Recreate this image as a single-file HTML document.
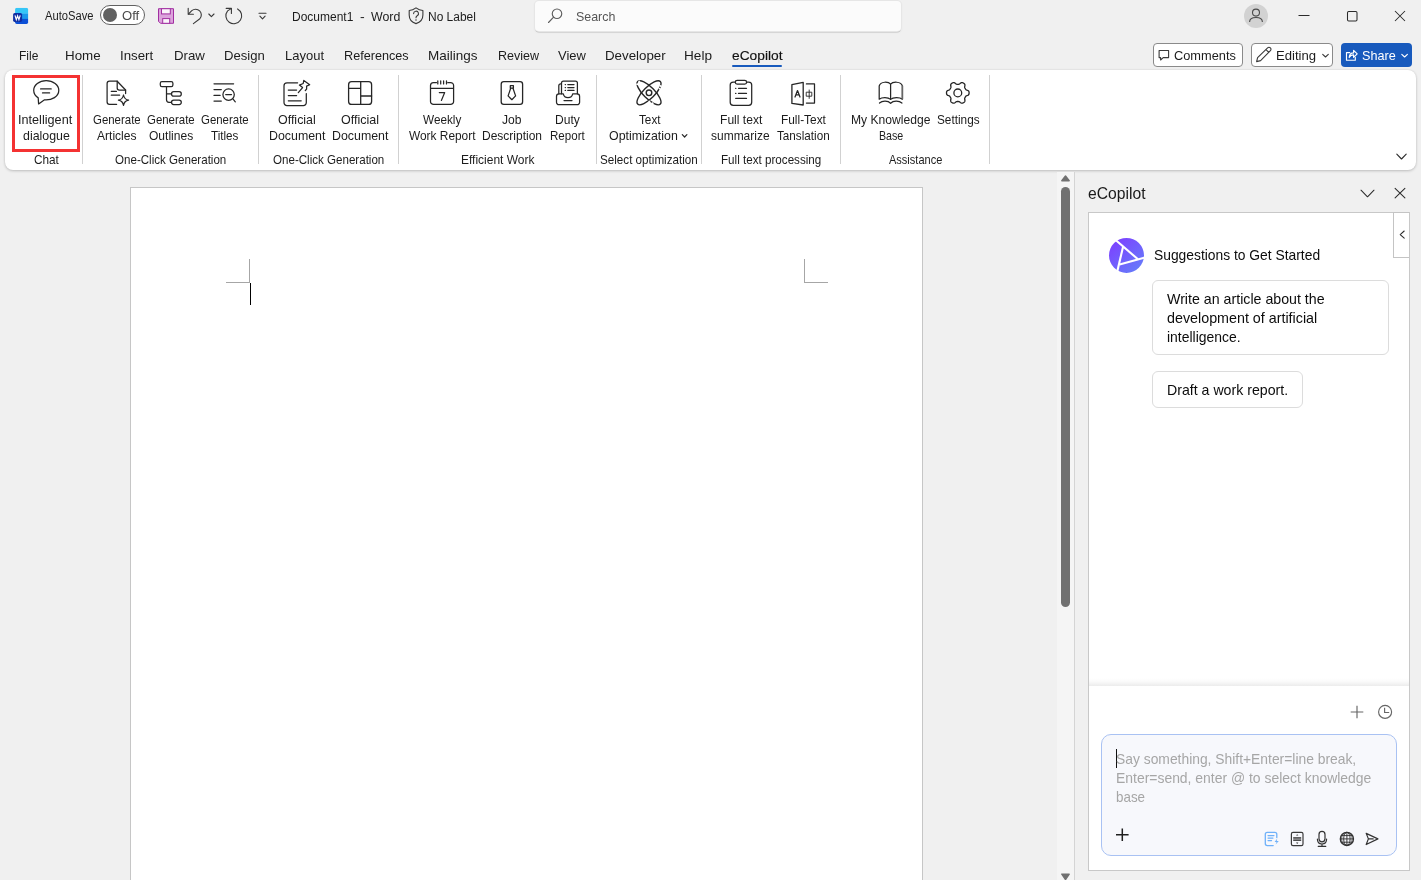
<!DOCTYPE html>
<html><head><meta charset="utf-8"><title>Word</title>
<style>
html,body{margin:0;padding:0;}
body{width:1421px;height:880px;overflow:hidden;background:#f0f0f0;position:relative;font-family:"Liberation Sans",sans-serif;}
.a{position:absolute;}
.t{position:absolute;white-space:nowrap;transform-origin:0 0;line-height:normal;}
svg{position:absolute;overflow:visible;}
.sep{position:absolute;width:1px;top:75px;height:89px;background:#d1d1d1;}
.ic{fill:none;stroke:#333;stroke-width:1;stroke-linecap:round;stroke-linejoin:round;}
</style></head><body>

<!-- ===== search box ===== -->
<div class="a" style="left:535px;top:1px;width:366px;height:30px;background:#fbfbfb;border-radius:4px;box-shadow:0 0 0 1px #e6e6e6,0 1.5px 0.5px rgba(0,0,0,.17),0 1px 3px rgba(0,0,0,.08);"></div>

<!-- ===== toggle ===== -->
<div class="a" style="left:100px;top:5px;width:43px;height:18px;border:1px solid #616161;border-radius:10px;background:#fff;"></div>
<div class="a" style="left:103.1px;top:8px;width:13.8px;height:13.8px;border-radius:7px;background:#616161;"></div>

<!-- avatar -->
<div class="a" style="left:1244px;top:4px;width:24px;height:24px;border-radius:12px;background:#d2d2d2;"></div>

<!-- ===== tab underline ===== -->
<div class="a" style="left:732px;top:64.5px;width:50px;height:2.5px;background:#185abd;border-radius:1px;"></div>

<!-- ===== right buttons ===== -->
<div class="a" style="left:1153px;top:43px;width:88px;height:22px;border:1px solid #8a8a8a;border-radius:4px;background:#fff;"></div>
<div class="a" style="left:1251px;top:43px;width:80px;height:22px;border:1px solid #8a8a8a;border-radius:4px;background:#fff;"></div>
<div class="a" style="left:1341px;top:43px;width:71px;height:24px;border-radius:4px;background:#185abd;"></div>

<!-- ===== ribbon panel ===== -->
<div class="a" style="left:5px;top:70px;width:1411px;height:100px;background:#fff;border-radius:8px;box-shadow:0 1px 3px rgba(0,0,0,.2),0 0 2px rgba(0,0,0,.08);"></div>
<div class="a" style="left:12px;top:75px;width:62px;height:71px;border:3px solid #f43232;"></div>
<div class="sep" style="left:82px;"></div>
<div class="sep" style="left:258px;"></div>
<div class="sep" style="left:398px;"></div>
<div class="sep" style="left:596px;"></div>
<div class="sep" style="left:701px;"></div>
<div class="sep" style="left:840px;"></div>
<div class="sep" style="left:989px;"></div>

<!-- ===== document page ===== -->
<div class="a" style="left:130px;top:187px;width:791px;height:700px;background:#fff;border:1px solid #c6c6c6;"></div>
<div class="a" style="left:249px;top:259px;width:1px;height:24px;background:#a6a6a6;"></div>
<div class="a" style="left:226px;top:282px;width:24px;height:1px;background:#a6a6a6;"></div>
<div class="a" style="left:804px;top:259px;width:1px;height:24px;background:#a6a6a6;"></div>
<div class="a" style="left:804px;top:282px;width:24px;height:1px;background:#a6a6a6;"></div>
<div class="a" style="left:250px;top:283px;width:1px;height:22px;background:#000;"></div>

<!-- ===== scrollbar ===== -->
<div class="a" style="left:1057px;top:172px;width:17px;height:708px;background:#f5f5f5;"></div>
<div class="a" style="left:1061px;top:187px;width:9px;height:420px;background:#717171;border-radius:4.5px;"></div>
<svg style="left:1061px;top:175px" width="9" height="7"><path d="M4.5 1 L8.2 5.8 H0.8 Z" fill="#717171" stroke="#717171" stroke-width="1.4" stroke-linejoin="round"/></svg>
<svg style="left:1061px;top:873px" width="9" height="8"><path d="M0.8 1.2 H8.2 L4.5 6.6 Z" fill="#717171" stroke="#717171" stroke-width="1.4" stroke-linejoin="round"/></svg>
<div class="a" style="left:1074px;top:172px;width:1px;height:708px;background:#d4d4d4;"></div>

<!-- ===== pane ===== -->
<div class="a" style="left:1088px;top:212px;width:320px;height:657px;background:#fff;border:1px solid #c8c8c8;"></div>
<div class="a" style="left:1393px;top:212px;width:15px;height:44px;background:#fff;border:1px solid #c4c4c4;border-right:none;"></div>
<!-- shadow above input -->
<div class="a" style="left:1089px;top:678px;width:320px;height:8px;background:linear-gradient(#fff,#fbfbfb 40%,#ececec);"></div>
<!-- cards -->
<div class="a" style="left:1152px;top:280px;width:235px;height:73px;border:1px solid #dcdcdc;border-radius:6px;background:#fff;"></div>
<div class="a" style="left:1152px;top:371px;width:149px;height:35px;border:1px solid #dcdcdc;border-radius:6px;background:#fff;"></div>
<!-- input -->
<div class="a" style="left:1101px;top:734px;width:294px;height:120px;border:1px solid #a9c2f3;border-radius:10px;background:#f7f8fc;"></div>
<div class="a" style="left:1116px;top:749px;width:1px;height:19px;background:#111;"></div>

<svg style="left:0;top:0" width="1421" height="880" viewBox="0 0 1421 880">
<g>
<clipPath id="wc"><rect x="15.1" y="7.8" width="13" height="16.1" rx="1.6"/></clipPath>
<g clip-path="url(#wc)"><rect x="15" y="7.8" width="14" height="6" fill="#35c6f7"/><rect x="15" y="13.6" width="14" height="5.4" fill="#1b97ea"/><rect x="15" y="18.9" width="14" height="5.2" fill="#0b4fd6"/></g>
<rect x="13.1" y="12.9" width="9" height="9" rx="1.6" fill="#0f2fa3"/>
<path d="M15 15.3 L16.3 19.7 L17.6 15.9 L18.9 19.7 L20.2 15.3" fill="none" stroke="#fff" stroke-width="1.15" stroke-linejoin="miter"/>
</g>
<path d="M158.5 8.7 H173.5 V23.3 H160.5 L158.5 21.3 Z" fill="#dca3dc" stroke="#a12ea1" stroke-width="1"/>
<rect x="161.5" y="8.7" width="8.8" height="5.2" fill="#fbf4fb" stroke="#a12ea1" stroke-width="1"/>
<rect x="162.7" y="18.6" width="7" height="4.7" fill="#fbf4fb" stroke="#a12ea1" stroke-width="1"/>
<g fill="none" stroke="#3a3a3a" stroke-width="1.1" stroke-linecap="round" stroke-linejoin="round">
<path d="M188.2 8.3 V14.3 H193.4"/>
<path d="M188.5 14 L191.8 10.7 a5.7 5.7 0 0 1 8.05 8.05 L193.4 23.6"/>
<path d="M208.8 14 L211.4 16.7 L214 14"/>
<path d="M226.2 8.4 H231.4 V13.5"/>
<path d="M237.6 8.9 A7.9 7.9 0 1 1 227.6 10.9 L231.2 8.6"/>
<path d="M259 13.2 H266"/><path d="M259.9 16.2 L262.5 18.9 L265.1 16.2"/>
<path d="M416 7.9 C413.8 9.6 411.5 10.4 409.2 10.5 V15 C409.2 19.5 412 22.4 416 23.6 C420 22.4 422.9 19.5 422.9 15 V10.5 C420.5 10.4 418.2 9.6 416 7.9 Z"/>
<path d="M413.6 13.6 a2.45 2.45 0 1 1 3.6 2.2 c-0.8 0.5 -1.2 1 -1.2 2"/>
</g>
<circle cx="416" cy="20" r="0.75" fill="#3a3a3a"/>
<g fill="none" stroke="#5e5e5e" stroke-width="1.15" stroke-linecap="round"><circle cx="557" cy="13.7" r="4.75"/><path d="M553.6 17.2 L548.5 22.5"/></g>
<g fill="none" stroke="#4a4a4a" stroke-width="1.1"><circle cx="1256" cy="12.6" r="3.5"/><path d="M1249.6 22 C1249.6 18.6 1252 17.5 1256 17.5 C1260 17.5 1262.4 18.6 1262.4 22"/></g>
<g fill="none" stroke="#2b2b2b" stroke-width="1.05"><path d="M1298.5 15.5 H1309.5"/><rect x="1347.5" y="11.5" width="9.5" height="9.5" rx="1.2"/><path d="M1395 11 L1405 21 M1405 11 L1395 21"/></g>
<g fill="none" stroke="#3a3a3a" stroke-width="1.1" stroke-linejoin="round" stroke-linecap="round">
<path d="M1159.1 50.5 H1168.6 V57.6 H1163.2 L1160.6 60 V57.6 H1159.1 Z"/>
<path d="M1256.6 61.6 L1257.6 57.6 L1267.6 47.9 a1.9 1.9 0 0 1 2.8 2.8 L1260.6 60.6 Z M1266 49.6 L1268.8 52.4"/>
<path d="M1322.7 54.3 L1325.5 57 L1328.3 54.3"/>
</g>
<g fill="none" stroke="#fff" stroke-width="1.15" stroke-linejoin="round" stroke-linecap="round">
<path d="M1349.8 52.6 H1346.5 V60.2 H1355.3 V57.4"/>
<path d="M1349.2 57.6 C1349.4 54.4 1351.3 52.9 1353.6 52.9 V50.4 L1357.2 53.9 L1353.6 57.3 V54.9 C1351.6 54.9 1350.2 55.6 1349.2 57.6 Z"/>
<path d="M1401.8 54.3 L1404.6 57 L1407.4 54.3"/>
</g>
<path d="M1396.8 154.2 L1401.5 159 L1406.2 154.2" fill="none" stroke="#2b2b2b" stroke-width="1.1" stroke-linecap="round" stroke-linejoin="round"/>
<g fill="none" stroke="#262626" stroke-width="1.25" stroke-linecap="round" stroke-linejoin="round">
<path d="M44.2 99.9 C52 100.6 58.8 96.4 58.8 90.3 C58.8 84.9 53.2 80.6 46.2 80.6 C39.2 80.6 33.7 84.9 33.7 90.3 C33.7 93.4 35.4 96.1 38.2 97.9 L38.6 103.9 Z"/>
<path d="M40.6 88.9 H51.2 M42.5 92.9 H49.6"/>
<path d="M116.6 104.4 H109.5 a2.4 2.4 0 0 1 -2.4 -2.4 V83.6 a2.4 2.4 0 0 1 2.4 -2.4 H117.2 L125.6 90 V93.6"/>
<path d="M117.2 81.2 V88 a2 2 0 0 0 2 2 H125.6"/>
<path d="M111.3 91.4 H116.4 M111.3 95.2 H119.6"/>
<path d="M123.5 95 Q124.3 99.4 128.6 100.2 Q124.3 101 123.5 105.4 Q122.7 101 118.4 100.2 Q122.7 99.4 123.5 95 Z"/>
<rect x="160.3" y="81.7" width="12.6" height="5" rx="1.6"/>
<path d="M166.5 86.7 V99.8 a2.5 2.5 0 0 0 2.5 2.5 H171.5 M166.5 93.9 H171.5"/>
<rect x="171.5" y="91.7" width="9.8" height="4.4" rx="2.2"/><rect x="171.5" y="100.1" width="9.8" height="4.4" rx="2.2"/>
<path d="M214 83.8 H233.6 M214 89.5 H221.3 M214 95.4 H220.1 M214 101.1 H221.3"/>
<circle cx="228.6" cy="94.6" r="5.7"/><path d="M225.7 94.6 H231.5 M232.7 98.7 L235.3 101.8"/>
<path d="M297.6 82.8 H287 a3 3 0 0 0 -3 3 V102.6 a3 3 0 0 0 3 3 H303.3 a3 3 0 0 0 3 -3 V93.6"/>
<path d="M288.3 90 H296.6 M288.3 95.5 H296.6 M288.3 100.8 H301.2"/>
<path d="M298.3 92.6 L302.6 87.6 L299.4 85.1 L303.2 83.5 L303.8 80.4 L309.7 84.7 L306.6 86.1 L306.6 89.1 L305.3 90.5"/>
<g stroke-width="1.3"><rect x="348.6" y="81.7" width="23" height="22.7" rx="3"/><path d="M360.7 81.7 V104.4 M348.6 88.4 H360.7 M360.7 96 H371.6"/></g>
<path d="M436.5 82.5 H433.5 a3 3 0 0 0 -3 3 V101.4 a3 3 0 0 0 3 3 H450.6 a3 3 0 0 0 3 -3 V85.5 a3 3 0 0 0 -3 -3 H447.7 M430.5 88.4 H453.6"/>
<path d="M437.8 80.9 V83.9 M440.7 80.9 V83.9 M443.6 80.9 V83.9 M446.5 80.9 V83.9"/>
<path d="M439.3 92.6 H444.7 L441.4 100.4" stroke-width="1.2"/>
<rect x="501.2" y="81.7" width="21.4" height="22.7" rx="2.6" stroke-width="1.3"/>
<rect x="510.3" y="85.7" width="3.1" height="2.5"/><path d="M510.7 88.3 L508.1 95.9 L511.85 99.7 L515.6 95.9 L513 88.3"/>
<path d="M556.5 96.4 a2.5 2.5 0 0 1 2.5 -2.5 H563.3 C563.8 96.4 565.6 97.6 568 97.6 C570.4 97.6 572.2 96.4 572.7 93.9 H577.1 a2.5 2.5 0 0 1 2.5 2.5 V102.2 a2.5 2.5 0 0 1 -2.5 2.5 H559 a2.5 2.5 0 0 1 -2.5 -2.5 Z"/>
<path d="M561.5 93.8 V83.1 a2 2 0 0 1 2 -2 H575.4 a2 2 0 0 1 2 2 V93.8 M558.8 93.8 V85.8 a2 2 0 0 1 2 -2 H561.4"/>
<path d="M567.8 84.5 H574 M567.8 87.5 H574 M567.8 90.4 H574 M564 100.5 H572"/>
<path d="M565.2 84.5 h0.3 M565.2 87.5 h0.3 M565.2 90.4 h0.3"/>
<g stroke-width="1.4"><ellipse cx="649" cy="92.8" rx="16" ry="5.7" transform="rotate(45 649 92.8)"/><ellipse cx="649" cy="92.8" rx="16" ry="5.7" transform="rotate(-45 649 92.8)"/><circle cx="649" cy="92.8" r="2.8"/></g>
<g fill="#fff" stroke="none"><circle cx="639.2" cy="81.6" r="1"/><circle cx="637.2" cy="84.3" r="1"/><circle cx="660.6" cy="86" r="1"/><circle cx="659.4" cy="88.6" r="0.9"/><circle cx="649.4" cy="101.6" r="1"/><circle cx="652.6" cy="103.2" r="1"/></g>
<rect x="730.2" y="82.1" width="21.5" height="23.2" rx="3"/>
<rect x="735.3" y="80.3" width="11.3" height="3.7" rx="1.85" fill="#fff"/>
<path d="M738.5 88.3 H746.5 M738.5 93.4 H746.5 M735.7 98.4 H746.5 M735.6 88.3 h0.3 M735.6 93.4 h0.3"/>
<path d="M803.2 82.3 L791.9 84.6 V103.4 L803.2 105 Z" stroke-width="1.3"/><path d="M806.4 83.9 H814.5 V103.1 H806.4"/>
<path d="M795 97 L797.5 90.6 L800 97 M795.9 94.9 H799.1"/>
<path d="M806.6 92.2 H811.8 V96.2 H806.6 Z M809.2 90 V98.4" stroke-width="0.9"/>
<path d="M890.6 84.2 C888.6 81.6 880.6 81 879.2 86 V99.2 C882 97 888 97 890.6 99.4 C893.2 97 899.6 97 902.4 99.2 V86 C901 81 892.6 81.6 890.6 84.2 Z M890.6 84.2 V99.4"/>
<path d="M879.5 103 C882.4 100.6 888 100.6 890.6 103.3 C893.2 100.6 899 100.6 901.9 103" />
<path d="M902.4 86 V99" stroke-width="1.6" stroke="#666"/>
<path d="M969.10 92.90 L969.09 93.20 L969.07 93.49 L969.03 93.78 L968.96 94.07 L968.86 94.36 L968.71 94.63 L968.50 94.88 L968.21 95.11 L967.84 95.31 L967.41 95.48 L966.98 95.62 L966.60 95.76 L966.30 95.91 L966.06 96.07 L965.88 96.25 L965.73 96.43 L965.60 96.62 L965.48 96.81 L965.36 97.01 L965.25 97.20 L965.14 97.40 L965.03 97.59 L964.92 97.79 L964.82 98.00 L964.74 98.22 L964.68 98.47 L964.65 98.75 L964.68 99.09 L964.75 99.49 L964.84 99.94 L964.91 100.39 L964.92 100.81 L964.87 101.18 L964.75 101.49 L964.59 101.75 L964.39 101.98 L964.18 102.18 L963.95 102.36 L963.70 102.53 L963.45 102.69 L963.19 102.83 L962.92 102.95 L962.65 103.06 L962.36 103.15 L962.07 103.21 L961.76 103.21 L961.43 103.16 L961.09 103.02 L960.73 102.80 L960.38 102.51 L960.04 102.21 L959.72 101.95 L959.44 101.76 L959.18 101.64 L958.94 101.57 L958.71 101.53 L958.48 101.51 L958.25 101.50 L958.03 101.50 L957.80 101.50 L957.57 101.50 L957.35 101.50 L957.12 101.51 L956.89 101.53 L956.66 101.57 L956.42 101.64 L956.16 101.76 L955.88 101.95 L955.56 102.21 L955.22 102.51 L954.87 102.80 L954.51 103.02 L954.17 103.16 L953.84 103.21 L953.53 103.21 L953.24 103.15 L952.95 103.06 L952.68 102.95 L952.41 102.83 L952.15 102.69 L951.90 102.53 L951.65 102.36 L951.42 102.18 L951.21 101.98 L951.01 101.75 L950.85 101.49 L950.73 101.18 L950.68 100.81 L950.69 100.39 L950.76 99.94 L950.85 99.49 L950.92 99.09 L950.95 98.75 L950.92 98.47 L950.86 98.22 L950.78 98.00 L950.68 97.79 L950.57 97.59 L950.46 97.40 L950.35 97.20 L950.24 97.01 L950.12 96.81 L950.00 96.62 L949.87 96.43 L949.72 96.25 L949.54 96.07 L949.30 95.91 L949.00 95.76 L948.62 95.62 L948.19 95.48 L947.76 95.31 L947.39 95.11 L947.10 94.88 L946.89 94.63 L946.74 94.36 L946.64 94.07 L946.57 93.78 L946.53 93.49 L946.51 93.20 L946.50 92.90 L946.51 92.60 L946.53 92.31 L946.57 92.02 L946.64 91.73 L946.74 91.44 L946.89 91.17 L947.10 90.92 L947.39 90.69 L947.76 90.49 L948.19 90.32 L948.62 90.18 L949.00 90.04 L949.30 89.89 L949.54 89.73 L949.72 89.55 L949.87 89.37 L950.00 89.18 L950.12 88.99 L950.24 88.79 L950.35 88.60 L950.46 88.40 L950.57 88.21 L950.68 88.01 L950.78 87.80 L950.86 87.58 L950.92 87.33 L950.95 87.05 L950.92 86.71 L950.85 86.31 L950.76 85.86 L950.69 85.41 L950.68 84.99 L950.73 84.62 L950.85 84.31 L951.01 84.05 L951.21 83.82 L951.42 83.62 L951.65 83.44 L951.90 83.27 L952.15 83.11 L952.41 82.97 L952.68 82.85 L952.95 82.74 L953.24 82.65 L953.53 82.59 L953.84 82.59 L954.17 82.64 L954.51 82.78 L954.87 83.00 L955.22 83.29 L955.56 83.59 L955.88 83.85 L956.16 84.04 L956.42 84.16 L956.66 84.23 L956.89 84.27 L957.12 84.29 L957.35 84.30 L957.57 84.30 L957.80 84.30 L958.03 84.30 L958.25 84.30 L958.48 84.29 L958.71 84.27 L958.94 84.23 L959.18 84.16 L959.44 84.04 L959.72 83.85 L960.04 83.59 L960.38 83.29 L960.73 83.00 L961.09 82.78 L961.43 82.64 L961.76 82.59 L962.07 82.59 L962.36 82.65 L962.65 82.74 L962.92 82.85 L963.19 82.97 L963.45 83.11 L963.70 83.27 L963.95 83.44 L964.18 83.62 L964.39 83.82 L964.59 84.05 L964.75 84.31 L964.87 84.62 L964.92 84.99 L964.91 85.41 L964.84 85.86 L964.75 86.31 L964.68 86.71 L964.65 87.05 L964.68 87.33 L964.74 87.58 L964.82 87.80 L964.92 88.01 L965.03 88.21 L965.14 88.40 L965.25 88.60 L965.36 88.79 L965.48 88.99 L965.60 89.18 L965.73 89.37 L965.88 89.55 L966.06 89.73 L966.30 89.89 L966.60 90.04 L966.98 90.18 L967.41 90.32 L967.84 90.49 L968.21 90.69 L968.50 90.92 L968.71 91.17 L968.86 91.44 L968.96 91.73 L969.03 92.02 L969.07 92.31 L969.09 92.60 Z" stroke-width="1.3"/><circle cx="957.8" cy="92.9" r="3.9" stroke-width="1.3"/>
<path d="M682.3 134.7 L684.6 137 L686.9 134.7" stroke-width="1.2"/>
</g>
<g fill="none" stroke="#2b2b2b" stroke-width="1.05" stroke-linecap="round" stroke-linejoin="round">
<path d="M1361 190.2 L1367.5 196.8 L1374 190.2"/><path d="M1395.1 188.3 L1404.9 197.9 M1404.9 188.3 L1395.1 197.9"/>
<path d="M1404.2 231 L1400.2 234.6 L1404.2 238.2"/>
</g>
<defs><linearGradient id="lg" x1="0.15" y1="0.1" x2="0.85" y2="0.95"><stop offset="0" stop-color="#7c42ff"/><stop offset="1" stop-color="#667cfa"/></linearGradient></defs>
<circle cx="1126.5" cy="255.4" r="17.5" fill="url(#lg)"/>
<g stroke="#fff" stroke-width="2.1" stroke-linecap="butt" fill="none"><path d="M1115.9 240.3 L1138 259.3"/><path d="M1145 257.6 L1119.6 264.4"/><path d="M1117.2 271.8 L1123 247"/></g>
<g fill="none" stroke="#666" stroke-width="1.15" stroke-linecap="butt"><path d="M1350.7 712 H1363.3 M1357 705.7 V718.3"/><circle cx="1385.1" cy="711.9" r="6.5"/><path d="M1384.6 707.8 V712.5 H1389.2"/></g>
<path d="M1116 834.7 H1128.6 M1122.3 828.4 V841" fill="none" stroke="#1f1f1f" stroke-width="1.5"/>
<g fill="none" stroke="#6fb1f9" stroke-width="1.3" stroke-linecap="round" stroke-linejoin="round"><path d="M1276.8 837.6 V834.3 a2 2 0 0 0 -2 -2 H1267.3 a2 2 0 0 0 -2 2 V843.6 a2 2 0 0 0 2 2 H1273.2"/><path d="M1268 835.6 H1274 M1268 838.1 H1273 M1268 840.6 H1271.6" stroke-width="1.1"/></g>
<path d="M1277.3 838.6 L1274.6 842 H1276.6 L1275.6 844.6 L1278.8 840.9 H1276.7 Z" fill="#6fb1f9"/>
<rect x="1291.4" y="832.4" width="11.6" height="13.2" rx="1.6" fill="none" stroke="#3a3a3a" stroke-width="1.2"/>
<rect x="1293.2" y="837.2" width="8" height="1.5" fill="#3a3a3a"/><rect x="1293.2" y="839.4" width="8" height="1.5" fill="#3a3a3a"/>
<path d="M1296 835.6 L1297.2 834.2 L1298.4 835.6 Z M1296 842.5 L1297.2 843.9 L1298.4 842.5 Z" fill="#3a3a3a"/>
<g fill="none" stroke="#333" stroke-width="1.2" stroke-linecap="round"><rect x="1319" y="831.4" width="6" height="10.4" rx="3"/><path d="M1317.4 839 C1317.4 842.4 1319.4 844 1322 844 C1324.6 844 1326.6 842.4 1326.6 839 M1322 844.1 V846.2 M1318.2 846.3 H1325.8"/></g>
<g fill="none" stroke="#333" stroke-width="0.95"><circle cx="1346.9" cy="838.9" r="6.6" stroke-width="1.3"/><ellipse cx="1346.9" cy="838.9" rx="3.2" ry="6.6"/><path d="M1346.9 832.3 V845.5 M1340.3 838.9 H1353.5 M1341.3 835.6 H1352.5 M1341.3 842.2 H1352.5"/><ellipse cx="1346.9" cy="838.9" rx="5.3" ry="6.6" stroke-width="0.7"/></g>
<path d="M1366.2 833.4 L1377.9 838.9 L1366.2 844.5 L1368.4 838.9 Z M1368.4 838.9 H1373.2" fill="none" stroke="#333" stroke-width="1.2" stroke-linejoin="round" stroke-linecap="round"/>
</svg>

<div class="a" style="left:0;top:0;width:1421px;height:880px;will-change:transform;">
<div class="t" style="left:44.5px;top:9.1px;font-size:12px;color:#1c1c1c;transform:scaleX(0.9319);">AutoSave</div>
<div class="t" style="left:122.1px;top:8.9px;font-size:12px;color:#4a4a4a;transform:scaleX(1.0888);">Off</div>
<div class="t" style="left:292.0px;top:10.0px;font-size:12.3px;color:#1c1c1c;transform:scaleX(0.9747);">Document1</div>
<div class="t" style="left:360.0px;top:10.0px;font-size:12.3px;color:#1c1c1c;transform:scaleX(1.1437);">-</div>
<div class="t" style="left:370.5px;top:10.0px;font-size:12.3px;color:#1c1c1c;transform:scaleX(1.0044);">Word</div>
<div class="t" style="left:427.5px;top:10.0px;font-size:12.3px;color:#1c1c1c;transform:scaleX(0.9729);">No Label</div>
<div class="t" style="left:575.6px;top:9.6px;font-size:12.6px;color:#555;transform:scaleX(0.9873);">Search</div>
<div class="t" style="left:18.6px;top:48.1px;font-size:13.3px;color:#1c1c1c;transform:scaleX(0.9050);">File</div>
<div class="t" style="left:64.5px;top:48.1px;font-size:13.3px;color:#1c1c1c;transform:scaleX(1.0061);">Home</div>
<div class="t" style="left:120.3px;top:48.1px;font-size:13.3px;color:#1c1c1c;transform:scaleX(0.9980);">Insert</div>
<div class="t" style="left:173.6px;top:48.1px;font-size:13.3px;color:#1c1c1c;transform:scaleX(0.9958);">Draw</div>
<div class="t" style="left:223.6px;top:48.1px;font-size:13.3px;color:#1c1c1c;transform:scaleX(0.9857);">Design</div>
<div class="t" style="left:284.8px;top:48.1px;font-size:13.3px;color:#1c1c1c;transform:scaleX(0.9765);">Layout</div>
<div class="t" style="left:343.6px;top:48.1px;font-size:13.3px;color:#1c1c1c;transform:scaleX(0.9515);">References</div>
<div class="t" style="left:427.7px;top:48.1px;font-size:13.3px;color:#1c1c1c;transform:scaleX(1.0147);">Mailings</div>
<div class="t" style="left:497.5px;top:48.1px;font-size:13.3px;color:#1c1c1c;transform:scaleX(0.9425);">Review</div>
<div class="t" style="left:557.7px;top:48.1px;font-size:13.3px;color:#1c1c1c;transform:scaleX(0.9722);">View</div>
<div class="t" style="left:604.6px;top:48.1px;font-size:13.3px;color:#1c1c1c;transform:scaleX(1.0015);">Developer</div>
<div class="t" style="left:684.3px;top:48.1px;font-size:13.3px;color:#1c1c1c;transform:scaleX(1.0234);">Help</div>
<div class="t" style="left:731.7px;top:48.1px;font-size:13.3px;color:#111;-webkit-text-stroke:0.15px #111;transform:scaleX(1.0349);">eCopilot</div>
<div class="t" style="left:1174.1px;top:48.3px;font-size:13.3px;color:#1c1c1c;transform:scaleX(0.9627);">Comments</div>
<div class="t" style="left:1275.7px;top:48.3px;font-size:13.3px;color:#1c1c1c;transform:scaleX(0.9859);">Editing</div>
<div class="t" style="left:1361.6px;top:48.3px;font-size:13.3px;color:#fff;transform:scaleX(0.9497);">Share</div>
<div class="t" style="left:18.4px;top:113.2px;font-size:12.2px;color:#1c1c1c;transform:scaleX(1.0389);">Intelligent</div>
<div class="t" style="left:22.9px;top:129.1px;font-size:12.2px;color:#1c1c1c;transform:scaleX(1.0153);">dialogue</div>
<div class="t" style="left:33.6px;top:153.1px;font-size:12.2px;color:#1c1c1c;transform:scaleX(0.9670);">Chat</div>
<div class="t" style="left:92.7px;top:113.2px;font-size:12.2px;color:#1c1c1c;transform:scaleX(0.9385);">Generate</div>
<div class="t" style="left:97.0px;top:129.1px;font-size:12.2px;color:#1c1c1c;transform:scaleX(0.9883);">Articles</div>
<div class="t" style="left:146.8px;top:113.2px;font-size:12.2px;color:#1c1c1c;transform:scaleX(0.9385);">Generate</div>
<div class="t" style="left:148.8px;top:129.1px;font-size:12.2px;color:#1c1c1c;transform:scaleX(0.9884);">Outlines</div>
<div class="t" style="left:200.8px;top:113.2px;font-size:12.2px;color:#1c1c1c;transform:scaleX(0.9385);">Generate</div>
<div class="t" style="left:211.0px;top:129.1px;font-size:12.2px;color:#1c1c1c;transform:scaleX(0.9556);">Titles</div>
<div class="t" style="left:114.7px;top:153.1px;font-size:12.2px;color:#1c1c1c;transform:scaleX(0.9498);">One-Click Generation</div>
<div class="t" style="left:278.0px;top:113.2px;font-size:12.2px;color:#1c1c1c;transform:scaleX(1.0208);">Official</div>
<div class="t" style="left:268.7px;top:129.1px;font-size:12.2px;color:#1c1c1c;transform:scaleX(1.0154);">Document</div>
<div class="t" style="left:340.8px;top:113.2px;font-size:12.2px;color:#1c1c1c;transform:scaleX(1.0262);">Official</div>
<div class="t" style="left:331.7px;top:129.1px;font-size:12.2px;color:#1c1c1c;transform:scaleX(1.0154);">Document</div>
<div class="t" style="left:272.6px;top:153.1px;font-size:12.2px;color:#1c1c1c;transform:scaleX(0.9498);">One-Click Generation</div>
<div class="t" style="left:422.7px;top:113.2px;font-size:12.2px;color:#1c1c1c;transform:scaleX(0.9639);">Weekly</div>
<div class="t" style="left:408.6px;top:129.1px;font-size:12.2px;color:#1c1c1c;transform:scaleX(0.9753);">Work Report</div>
<div class="t" style="left:502.0px;top:113.2px;font-size:12.2px;color:#1c1c1c;transform:scaleX(0.9921);">Job</div>
<div class="t" style="left:481.8px;top:129.1px;font-size:12.2px;color:#1c1c1c;transform:scaleX(0.9841);">Description</div>
<div class="t" style="left:555.0px;top:113.2px;font-size:12.2px;color:#1c1c1c;transform:scaleX(0.9895);">Duty</div>
<div class="t" style="left:550.2px;top:129.1px;font-size:12.2px;color:#1c1c1c;transform:scaleX(0.9482);">Report</div>
<div class="t" style="left:460.7px;top:153.1px;font-size:12.2px;color:#1c1c1c;transform:scaleX(0.9835);">Efficient Work</div>
<div class="t" style="left:638.6px;top:113.2px;font-size:12.2px;color:#1c1c1c;transform:scaleX(0.9616);">Text</div>
<div class="t" style="left:609.0px;top:129.1px;font-size:12.2px;color:#1c1c1c;transform:scaleX(1.0157);">Optimization</div>
<div class="t" style="left:600.0px;top:153.1px;font-size:12.2px;color:#1c1c1c;transform:scaleX(0.9560);">Select optimization</div>
<div class="t" style="left:719.6px;top:113.2px;font-size:12.2px;color:#1c1c1c;transform:scaleX(0.9913);">Full text</div>
<div class="t" style="left:711.4px;top:129.1px;font-size:12.2px;color:#1c1c1c;transform:scaleX(0.9833);">summarize</div>
<div class="t" style="left:780.9px;top:113.2px;font-size:12.2px;color:#1c1c1c;transform:scaleX(0.9748);">Full-Text</div>
<div class="t" style="left:777.3px;top:129.1px;font-size:12.2px;color:#1c1c1c;transform:scaleX(0.9601);">Tanslation</div>
<div class="t" style="left:720.7px;top:153.1px;font-size:12.2px;color:#1c1c1c;transform:scaleX(0.9552);">Full text processing</div>
<div class="t" style="left:850.8px;top:113.2px;font-size:12.2px;color:#1c1c1c;transform:scaleX(0.9931);">My Knowledge</div>
<div class="t" style="left:878.9px;top:129.1px;font-size:12.2px;color:#1c1c1c;transform:scaleX(0.8747);">Base</div>
<div class="t" style="left:936.6px;top:113.2px;font-size:12.2px;color:#1c1c1c;transform:scaleX(0.9672);">Settings</div>
<div class="t" style="left:888.5px;top:153.1px;font-size:12.2px;color:#1c1c1c;transform:scaleX(0.9043);">Assistance</div>
<div class="t" style="left:1087.6px;top:185.2px;font-size:15.8px;color:#1a1a1a;transform:scaleX(0.9919);">eCopilot</div>
<div class="t" style="left:1153.8px;top:246.8px;font-size:14.1px;color:#0c0c0c;transform:scaleX(0.9815);">Suggestions to Get Started</div>
<div class="t" style="left:1167.2px;top:291.0px;font-size:14.1px;color:#0c0c0c;transform:scaleX(1.0075);">Write an article about the</div>
<div class="t" style="left:1167.2px;top:310.2px;font-size:14.1px;color:#0c0c0c;transform:scaleX(1.0144);">development of artificial</div>
<div class="t" style="left:1167.2px;top:328.9px;font-size:14.1px;color:#0c0c0c;transform:scaleX(0.9887);">intelligence.</div>
<div class="t" style="left:1167.2px;top:381.7px;font-size:14.1px;color:#0c0c0c;transform:scaleX(1.0039);">Draft a work report.</div>
<div class="t" style="left:1115.8px;top:751.1px;font-size:14.1px;color:#a6a6a6;transform:scaleX(0.9827);">Say something, Shift+Enter=line break,</div>
<div class="t" style="left:1115.8px;top:769.8px;font-size:14.1px;color:#a6a6a6;transform:scaleX(0.9881);">Enter=send, enter @ to select knowledge</div>
<div class="t" style="left:1115.8px;top:789.0px;font-size:14.1px;color:#a6a6a6;transform:scaleX(0.9489);">base</div>
</div>
</body></html>
